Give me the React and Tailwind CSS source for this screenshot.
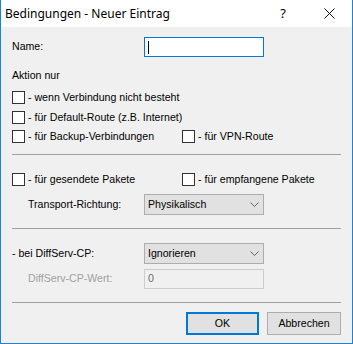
import { useState } from "react";

function Check({ label }) {
  const [on, setOn] = useState(false);
  return (
    <label className="flex h-[13px] items-center cursor-default">
      <span
        onClick={() => setOn((v) => !v)}
        className="flex h-[13px] w-[13px] items-center justify-center border border-[#333333] bg-white text-[10px] leading-none"
      >
        {on ? "✓" : ""}
      </span>
      <span className="ml-[3px]">{label}</span>
    </label>
  );
}

function Chevron() {
  return (
    <svg width="9" height="5" viewBox="0 0 9 5" className="text-[#606060]">
      <path d="M0.5 0.5 L4.5 4.5 L8.5 0.5" fill="none" stroke="currentColor" strokeWidth="1" />
    </svg>
  );
}

function Select({ value }) {
  return (
    <div className="flex h-[21px] w-[120px] items-center justify-between border border-[#adadad] bg-[#e1e1e1] pl-[3px] pr-[4px]">
      <span>{value}</span>
      <Chevron />
    </div>
  );
}

function Rule() {
  return <div className="h-px bg-[#a0a0a0]" />;
}

export default function App() {
  return (
    <div
      className="flex h-[344px] w-[353px] flex-col border-x border-b border-[#1883d7] bg-[#f0f0f0] text-[10.6px] text-black"
      style={{ fontFamily: '"Liberation Sans", Arial, sans-serif' }}
    >
      <div className="flex h-[27px] items-center bg-white pl-[4px] text-[12px]" style={{ fontFamily: '"Noto Sans", "Liberation Sans", sans-serif' }}>
        <span className="flex-1">Bedingungen - Neuer Eintrag</span>
        <span className="w-[46px] text-center text-[13px]">?</span>
        <span className="flex w-[46px] items-center justify-center">
          <svg width="11" height="11" viewBox="0 0 11 11">
            <path d="M0.5 0.5 L10.5 10.5 M10.5 0.5 L0.5 10.5" stroke="#111" strokeWidth="1" />
          </svg>
        </span>
      </div>

      <div className="flex flex-col pl-[11px] pr-[11px] pt-[10px]">
        <div className="flex h-[20px] items-center">
          <span className="w-[132px]">Name:</span>
          <div className="flex h-[20px] w-[120px] items-center border border-[#0078d7] bg-white pl-[3px]">
            <span className="h-[13px] w-px bg-black" />
          </div>
        </div>

        <div className="mt-[11px] flex h-[15px] items-center">Aktion nur</div>
        <div className="mt-[8px]">
          <Check label="- wenn Verbindung nicht besteht" />
        </div>
        <div className="mt-[7px]">
          <Check label="- für Default-Route (z.B. Internet)" />
        </div>
        <div className="mt-[6px] flex">
          <div className="w-[170px]">
            <Check label="- für Backup-Verbindungen" />
          </div>
          <Check label="- für VPN-Route" />
        </div>

        <div className="mt-[11px]">
          <Rule />
        </div>

        <div className="mt-[18px] flex">
          <div className="w-[170px]">
            <Check label="- für gesendete Pakete" />
          </div>
          <Check label="- für empfangene Pakete" />
        </div>
        <div className="mt-[8px] flex items-center">
          <span className="w-[132px] pl-[16px]">Transport-Richtung:</span>
          <Select value="Physikalisch" />
        </div>

        <div className="mt-[13px]">
          <Rule />
        </div>

        <div className="mt-[14px] flex items-center">
          <span className="w-[132px]">- bei DiffServ-CP:</span>
          <Select value="Ignorieren" />
        </div>
        <div className="mt-[5px] flex items-center">
          <span className="w-[132px] pl-[16px] text-[#a0a0a0]">DiffServ-CP-Wert:</span>
          <div className="flex h-[20px] w-[120px] items-center border border-[#cccccc] bg-[#f0f0f0] pl-[3px] text-[#6d6d6d]">
            0
          </div>
        </div>

        <div className="mt-[13px]">
          <Rule />
        </div>

        <div className="mt-[9px] flex justify-end gap-[8px]">
          <button className="h-[23px] w-[73px] border-2 border-[#0078d7] bg-[#e1e1e1]">OK</button>
          <button className="h-[23px] w-[74px] border border-[#adadad] bg-[#e1e1e1]">Abbrechen</button>
        </div>
      </div>
    </div>
  );
}
